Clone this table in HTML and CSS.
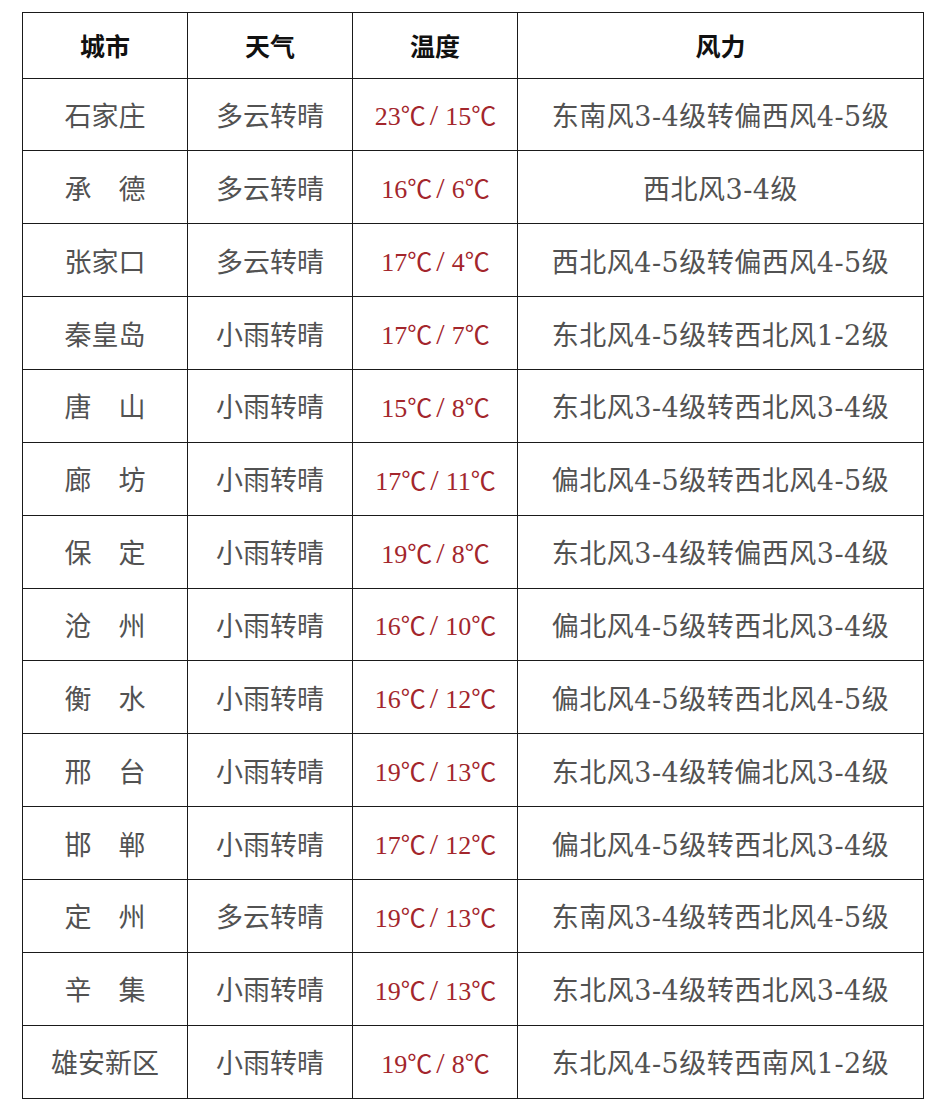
FILE: index.html
```html
<!DOCTYPE html>
<html lang="zh-CN">
<head>
<meta charset="utf-8">
<title>天气预报</title>
<link rel="stylesheet" href="styles.css">
</head>
<body>
<table class="wx">
<colgroup><col class="c1"><col class="c2"><col class="c3"><col class="c4"></colgroup>
<thead>
<tr><th>城市</th><th>天气</th><th>温度</th><th>风力</th></tr>
</thead>
<tbody>
<tr><td>石家庄</td><td>多云转晴</td><td class="t">23<span class="u">℃</span><span class="s">/</span>15<span class="u">℃</span></td><td class="w">东南风3-4级转偏西风4-5级</td></tr>
<tr><td>承　德</td><td>多云转晴</td><td class="t">16<span class="u">℃</span><span class="s">/</span>6<span class="u">℃</span></td><td class="w">西北风3-4级</td></tr>
<tr><td>张家口</td><td>多云转晴</td><td class="t">17<span class="u">℃</span><span class="s">/</span>4<span class="u">℃</span></td><td class="w">西北风4-5级转偏西风4-5级</td></tr>
<tr><td>秦皇岛</td><td>小雨转晴</td><td class="t">17<span class="u">℃</span><span class="s">/</span>7<span class="u">℃</span></td><td class="w">东北风4-5级转西北风1-2级</td></tr>
<tr><td>唐　山</td><td>小雨转晴</td><td class="t">15<span class="u">℃</span><span class="s">/</span>8<span class="u">℃</span></td><td class="w">东北风3-4级转西北风3-4级</td></tr>
<tr><td>廊　坊</td><td>小雨转晴</td><td class="t">17<span class="u">℃</span><span class="s">/</span>11<span class="u">℃</span></td><td class="w">偏北风4-5级转西北风4-5级</td></tr>
<tr><td>保　定</td><td>小雨转晴</td><td class="t">19<span class="u">℃</span><span class="s">/</span>8<span class="u">℃</span></td><td class="w">东北风3-4级转偏西风3-4级</td></tr>
<tr><td>沧　州</td><td>小雨转晴</td><td class="t">16<span class="u">℃</span><span class="s">/</span>10<span class="u">℃</span></td><td class="w">偏北风4-5级转西北风3-4级</td></tr>
<tr><td>衡　水</td><td>小雨转晴</td><td class="t">16<span class="u">℃</span><span class="s">/</span>12<span class="u">℃</span></td><td class="w">偏北风4-5级转西北风4-5级</td></tr>
<tr><td>邢　台</td><td>小雨转晴</td><td class="t">19<span class="u">℃</span><span class="s">/</span>13<span class="u">℃</span></td><td class="w">东北风3-4级转偏北风3-4级</td></tr>
<tr><td>邯　郸</td><td>小雨转晴</td><td class="t">17<span class="u">℃</span><span class="s">/</span>12<span class="u">℃</span></td><td class="w">偏北风4-5级转西北风3-4级</td></tr>
<tr><td>定　州</td><td>多云转晴</td><td class="t">19<span class="u">℃</span><span class="s">/</span>13<span class="u">℃</span></td><td class="w">东南风3-4级转西北风4-5级</td></tr>
<tr><td>辛　集</td><td>小雨转晴</td><td class="t">19<span class="u">℃</span><span class="s">/</span>13<span class="u">℃</span></td><td class="w">东北风3-4级转西北风3-4级</td></tr>
<tr><td>雄安新区</td><td>小雨转晴</td><td class="t">19<span class="u">℃</span><span class="s">/</span>8<span class="u">℃</span></td><td class="w">东北风4-5级转西南风1-2级</td></tr>
</tbody>
</table>
</body>
</html>
```
FILE: styles.css
```css
html, body {
  margin: 0;
  padding: 0;
  background: #ffffff;
}
body {
  padding: 12px 0 0 22px;
  font-family: "Liberation Serif", "Noto Sans CJK SC", serif;
}
.wx {
  border-collapse: collapse;
  width: 901px;
  table-layout: fixed;
}
.c1, .c2, .c3 { width: 165px; }
.c4 { width: 406px; }
.wx th, .wx td {
  border: 1.5px solid #1a1a1a;
  text-align: center;
  padding: 0;
  white-space: nowrap;
}
.wx th {
  height: 64.5px;
  font-size: 25px;
  font-weight: bold;
  color: #111;
}
.wx td {
  height: 71.86px;
  font-size: 27px;
  color: #525252;
}
.wx td.t {
  color: #a3262c;
  font-size: 26px;
}
.wx td.t .u {
  font-family: "Noto Sans CJK SC", sans-serif;
  font-size: 25px;
  letter-spacing: -1px;
}
.wx td.t .s {
  font-family: "Liberation Serif", serif;
  font-size: 30px;
  padding: 0 7px 0 5px;
}
.wx td.w {
  font-family: "DejaVu Serif", "Noto Sans CJK SC", serif;
  letter-spacing: 0.5px;
}
```
